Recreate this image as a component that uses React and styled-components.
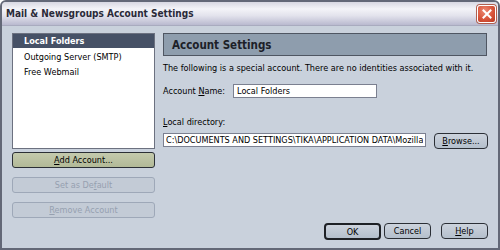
import styled, { createGlobalStyle } from "styled-components";

const GlobalStyle = createGlobalStyle`
    html, body {
        margin: 0;
        padding: 0;
        background: #ffffff;
    }
    body {
        font-family: "DejaVu Sans", "Liberation Sans", sans-serif;
        font-size: 8.15px;
        color: #000;
    }
`

function App() {
    return (
        <>
            <GlobalStyle />
            <Window>
                <TitleBar>
                    <Title>Mail &amp; Newsgroups Account Settings</Title>
                    <CloseButton aria-label="Close">
                        <svg width="10" height="10" viewBox="0 0 10 10">
                            <path d="M1.5 1.5 L8.5 8.5 M8.5 1.5 L1.5 8.5" stroke="#fff" strokeWidth="2" strokeLinecap="square" />
                        </svg>
                    </CloseButton>
                </TitleBar>
                <Body>
                    <Sidebar>
                        <AccountList>
                            <AccountItem $selected>Local Folders</AccountItem>
                            <AccountItem>Outgoing Server (SMTP)</AccountItem>
                            <AccountItem>Free Webmail</AccountItem>
                        </AccountList>
                        <SideButton $focused><u>A</u>dd Account...</SideButton>
                        <SideButton disabled>Set as De<u>f</u>ault</SideButton>
                        <SideButton disabled><u>R</u>emove Account</SideButton>
                    </Sidebar>
                    <Content>
                        <PanelHeader>Account Settings</PanelHeader>
                        <Note>The following is a special account. There are no identities associated with it.</Note>
                        <NameRow>
                            <Label>Account <u>N</u>ame:</Label>
                            <NameInput defaultValue="Local Folders" />
                        </NameRow>
                        <DirLabel><u>L</u>ocal directory:</DirLabel>
                        <DirRow>
                            <DirInput defaultValue="C:\DOCUMENTS AND SETTINGS\TIKA\APPLICATION DATA\Mozilla\Profiles" />
                            <Button $width={54}><u>B</u>rowse...</Button>
                        </DirRow>
                        <Footer>
                            <Button $width={57} $default>OK</Button>
                            <Button $width={47} $gap={3}>Cancel</Button>
                            <Button $width={47} $gap={10}><u>H</u>elp</Button>
                        </Footer>
                    </Content>
                </Body>
            </Window>
        </>
    );
}

const Window = styled.div`
    width: 500px;
    height: 250px;
    box-sizing: border-box;
    display: flex;
    flex-direction: column;
    background: #c9d1dc;
    border: 2px solid #636877;
    border-radius: 6px 6px 0 0;
    overflow: hidden;
`

const TitleBar = styled.div`
    height: 23px;
    flex: none;
    display: flex;
    align-items: center;
    justify-content: space-between;
    padding: 0 2px 0 4px;
    background: linear-gradient(to bottom, #d8d8e2 0%, #f4f4f8 30%, #e2e2ec 60%, #b9b9cf 100%);
    border-bottom: 1px solid #a9abbf;
`

const Title = styled.span`
    font-family: "DejaVu Sans Condensed", "DejaVu Sans", sans-serif;
    font-weight: bold;
    font-size: 10px;
    color: #2a2a38;
`

const CloseButton = styled.button`
    width: 19px;
    height: 18px;
    padding: 0;
    display: flex;
    align-items: center;
    justify-content: center;
    border: 1px solid #ffffff;
    border-radius: 3px;
    background: radial-gradient(circle at 40% 30%, #ec8a74 0%, #d8543a 55%, #b83a24 100%);
    box-shadow: 0 0 0 1px #b06050;
`

const Body = styled.div`
    flex: 1;
    display: flex;
    gap: 8px;
    padding: 7px 10px 8px 10px;
`

const Sidebar = styled.div`
    width: 143px;
    display: flex;
    flex-direction: column;
`

const AccountList = styled.div`
    height: 116px;
    box-sizing: border-box;
    background: #ffffff;
    border: 1px solid #6c7180;
    margin-bottom: 3px;
`

const AccountItem = styled.div`
    height: ${p => (p.$selected ? "14px" : "15px")};
    line-height: ${p => (p.$selected ? "14px" : "15px")};
    padding-left: 11px;
    font-weight: ${p => (p.$selected ? "bold" : "normal")};
    background: ${p => (p.$selected ? "#465166" : "transparent")};
    color: ${p => (p.$selected ? "#ffffff" : "#000000")};
    margin-bottom: ${p => (p.$selected ? "2px" : "0")};
`

const SideButton = styled.button`
    height: 16px;
    width: 143px;
    margin-bottom: 9px;
    padding: 0;
    font-family: inherit;
    font-size: inherit;
    border-radius: 3px;
    border: 1px solid ${p => (p.disabled ? "#9ea8b8" : "#2b2f36")};
    background: ${p => (p.$focused ? "linear-gradient(#c4caad, #b2b997)" : "#c3cbd6")};
    color: ${p => (p.disabled ? "#96a0b0" : "#000")};
`

const Content = styled.div`
    flex: 1;
    display: flex;
    flex-direction: column;
`

const PanelHeader = styled.div`
    height: 23px;
    box-sizing: border-box;
    margin-right: 1px;
    display: flex;
    align-items: center;
    padding-left: 8px;
    font-family: "DejaVu Sans Condensed", "DejaVu Sans", sans-serif;
    font-size: 11.5px;
    font-weight: bold;
    color: #1c2028;
    background: #8e9dad;
    border: 1px solid #4f5662;
`

const Note = styled.div`
    margin-top: 7px;
    height: 10px;
    line-height: 10px;
    white-space: nowrap;
`

const NameRow = styled.div`
    margin-top: 11px;
    display: flex;
    align-items: center;
`

const Label = styled.span`
    width: 70px;
`

const TextInput = styled.input`
    height: 14px;
    box-sizing: border-box;
    padding: 0 3px;
    margin: 0;
    font-family: inherit;
    font-size: inherit;
    background: #ffffff;
    border: 1px solid #7b8090;
    outline: none;
`

const NameInput = styled(TextInput)`
    width: 144px;
`

const DirLabel = styled.div`
    margin-top: 19px;
    height: 10px;
    line-height: 10px;
`

const DirRow = styled.div`
    margin-top: 6px;
    display: flex;
    align-items: flex-start;
    gap: 8px;
`

const DirInput = styled(TextInput)`
    width: 263px;
    padding: 0 2px;
`

const Button = styled.button`
    width: ${p => p.$width}px;
    height: ${p => (p.$default ? "17px" : "16px")};
    margin-left: ${p => p.$gap || 0}px;
    padding: 0;
    font-family: inherit;
    font-size: inherit;
    color: #000;
    border-radius: 4px;
    border: ${p => (p.$default ? "2px solid #1e2126" : "1px solid #2b2f36")};
    background: linear-gradient(#ccd3dd, #b4bfcc);
`

const Footer = styled.div`
    margin-top: auto;
    display: flex;
    justify-content: flex-end;
`

export default App;
